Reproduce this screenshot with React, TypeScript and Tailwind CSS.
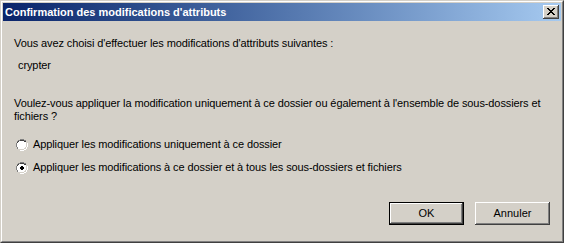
function Radio({ checked }: { checked?: boolean }) {
  return (
    <svg width="12" height="12" viewBox="0 0 12 12" className="shrink-0" shapeRendering="crispEdges">
      <path d="M4 0h4v1h2v1h-2v-1h-4v1h-2v2h-1v4h1v2h-1v-2h-1v-4h1v-2h1v-1h2z" fill="#808080" />
      <path d="M2 2h2v-1h4v1h2v2h1v4h-1v2h-2v1h-4v-1h-2v-2h-1v-4h1z" fill="#fff" />
      <path d="M4 1h4v1h2v1h-2v-1h-4v1h-2v1h-1v-1h1v-1h2z" fill="#404040" />
      <path d="M11 4h1v4h-1v2h-1v1h-2v1h-4v-1h4v-1h2v-2h1z" fill="#fff" />
      <path d="M10 4h1v4h-1v2h-2v1h-4v-1h4v-1h1v-1h1z" fill="#d4d0c8" />
      <path d="M2 3h1v-1h1v-0h4v1h1v1h1v4h-1v1h-1v1h-4v-1h-1v-1h-1z" fill="#fff" />
      {checked && <path d="M5 4h2v1h1v2h-1v1h-2v-1h-1v-2h1z" fill="#000" />}
    </svg>
  );
}

export default function App() {
  const font = "font-['Liberation_Sans','Arial',sans-serif]";
  const btn =
    "w-[75px] h-[23px] bg-[#d4d0c8] text-[11px] text-black flex items-center justify-center";
  return (
    <div className={`w-[564px] h-[243px] ${font} bg-[#d4d0c8] border border-t-[#d4d0c8] border-l-[#d4d0c8] border-r-[#404040] border-b-[#404040]`}>
      <div className="h-full border border-t-white border-l-white border-r-[#808080] border-b-[#808080] p-px">
        {/* Title bar */}
        <div className="h-[18px] flex items-center justify-between bg-gradient-to-r from-[#0a246a] to-[#a6caf0] pl-[2px] pr-[2px]">
          <span className="text-[11px] font-bold text-white leading-none">
            Confirmation des modifications d'attributs
          </span>
          <div className="w-[16px] h-[14px] bg-[#d4d0c8] flex items-center justify-center shadow-[inset_-1px_-1px_#404040,inset_1px_1px_#fff,inset_-2px_-2px_#808080,inset_2px_2px_#d4d0c8]">
            <svg width="8" height="7" viewBox="0 0 8 7" shapeRendering="crispEdges" className="-mt-px">
              <path
                d="M0 0h2v1h1v1h2v-1h1v-1h2v1h-1v1h-1v1h-1v1h1v1h1v1h1v1h-2v-1h-1v-1h-2v1h-1v1h-2v-1h1v-1h1v-1h1v-1h-1v-1h-1v-1h-1z"
                fill="#000"
              />
            </svg>
          </div>
        </div>

        {/* Body */}
        <div className="h-[216px] text-[11px] leading-[13px] tracking-[-0.1px] text-black">
          <div className="pl-[11px] pt-[16px]">
            Vous avez choisi d'effectuer les modifications d'attributs suivantes :
          </div>
          <div className="pl-[15px] mt-[9px]">crypter</div>
          <div className="pl-[11px] mt-[25px] whitespace-nowrap">
            Voulez-vous appliquer la modification uniquement à ce dossier ou également à l'ensemble de sous-dossiers et
            <br />
            fichiers ?
          </div>
          <div className="flex flex-col gap-[10px] mt-[15px] pl-[13px]">
            <label className="flex items-center gap-[5px] h-[13px]">
              <Radio />
              <span>Appliquer les modifications uniquement à ce dossier</span>
            </label>
            <label className="flex items-center gap-[5px] h-[13px]">
              <Radio checked />
              <span>Appliquer les modifications à ce dossier et à tous les sous-dossiers et fichiers</span>
            </label>
          </div>
          <div className="flex justify-end gap-[11px] pr-[11px] mt-[28px] tracking-normal">
            <button className={`${btn} border border-black shadow-[inset_-1px_-1px_#404040,inset_1px_1px_#fff,inset_-2px_-2px_#808080]`}>
              OK
            </button>
            <button className={`${btn} shadow-[inset_-1px_-1px_#404040,inset_1px_1px_#fff,inset_-2px_-2px_#808080,inset_2px_2px_#d4d0c8]`}>
              Annuler
            </button>
          </div>
        </div>
      </div>
    </div>
  );
}
